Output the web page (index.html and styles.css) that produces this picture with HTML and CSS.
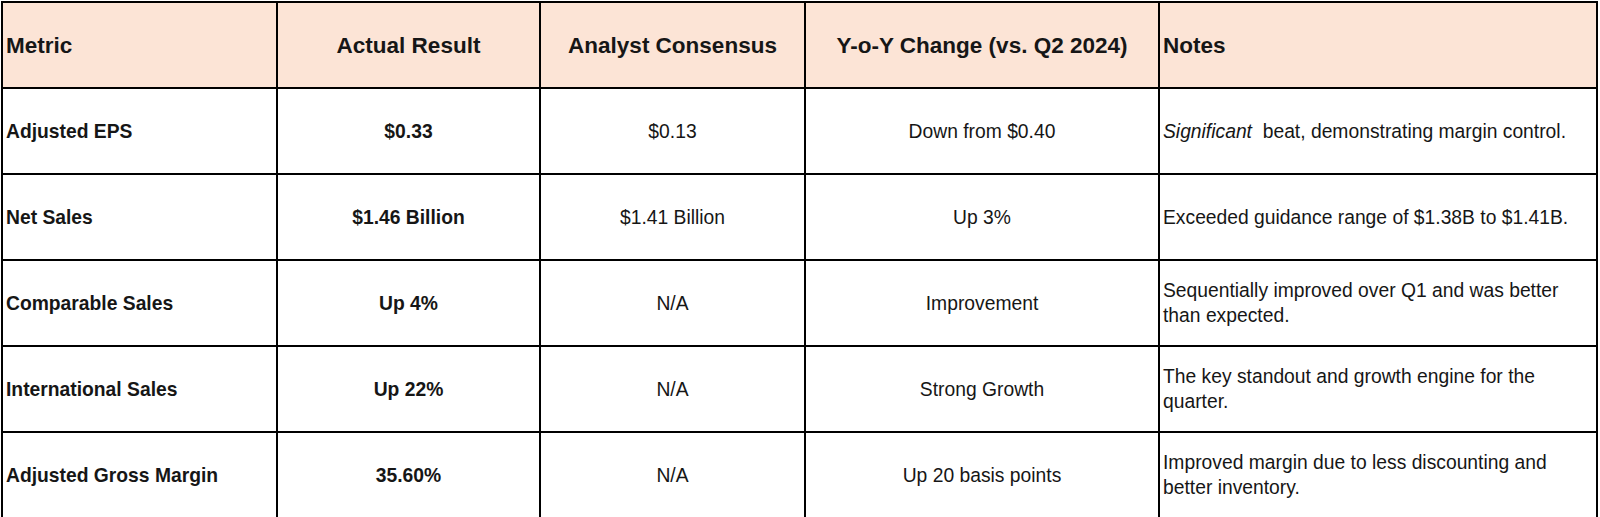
FILE: index.html
```html
<!DOCTYPE html>
<html>
<head>
<meta charset="utf-8">
<title>Q2 Results</title>
<link rel="stylesheet" href="styles.css">
</head>
<body>
<div class="table">
  <div class="cell head left">Metric</div>
  <div class="cell head">Actual Result</div>
  <div class="cell head">Analyst Consensus</div>
  <div class="cell head">Y-o-Y Change (vs. Q2 2024)</div>
  <div class="cell head left">Notes</div>

  <div class="cell left bold">Adjusted EPS</div>
  <div class="cell bold">$0.33</div>
  <div class="cell">$0.13</div>
  <div class="cell">Down from $0.40</div>
  <div class="cell left"><span><i class="em">Significant</i>&nbsp; beat, demonstrating margin control.</span></div>

  <div class="cell left bold">Net Sales</div>
  <div class="cell bold">$1.46 Billion</div>
  <div class="cell">$1.41 Billion</div>
  <div class="cell">Up 3%</div>
  <div class="cell left"><span>Exceeded guidance range of $1.38B to $1.41B.</span></div>

  <div class="cell left bold">Comparable Sales</div>
  <div class="cell bold">Up 4%</div>
  <div class="cell">N/A</div>
  <div class="cell">Improvement</div>
  <div class="cell left"><span>Sequentially improved over Q1 and was better than expected.</span></div>

  <div class="cell left bold">International Sales</div>
  <div class="cell bold">Up 22%</div>
  <div class="cell">N/A</div>
  <div class="cell">Strong Growth</div>
  <div class="cell left"><span>The key standout and growth engine for the quarter.</span></div>

  <div class="cell left bold">Adjusted Gross Margin</div>
  <div class="cell bold">35.60%</div>
  <div class="cell">N/A</div>
  <div class="cell">Up 20 basis points</div>
  <div class="cell left"><span>Improved margin due to less discounting and better inventory.</span></div>
</div>
</body>
</html>
```

FILE: styles.css
```css
html, body {
  margin: 0;
  padding: 0;
  background: #ffffff;
}
body {
  padding: 1px 0 0 1px;
  font-family: "Liberation Sans", Arial, sans-serif;
  color: #161616;
}
.table {
  display: grid;
  grid-template-columns: 275px 263px 265px 354px 438px;
  grid-auto-rows: 86px;
  width: max-content;
  border-top: 2px solid #000;
  border-left: 2px solid #000;
}
.cell {
  box-sizing: border-box;
  border-right: 2px solid #000;
  border-bottom: 2px solid #000;
  display: flex;
  align-items: center;
  justify-content: center;
  text-align: center;
  padding: 0 4px 0 4px;
  font-size: 19.3px;
  line-height: 25px;
}
.cell.left {
  justify-content: flex-start;
  text-align: left;
  padding-left: 3px;
}
.head {
  background: #fce4d6;
  font-weight: bold;
  font-size: 22.5px;
}
.bold {
  font-weight: bold;
}
.em {
  font-style: italic;
}
```
